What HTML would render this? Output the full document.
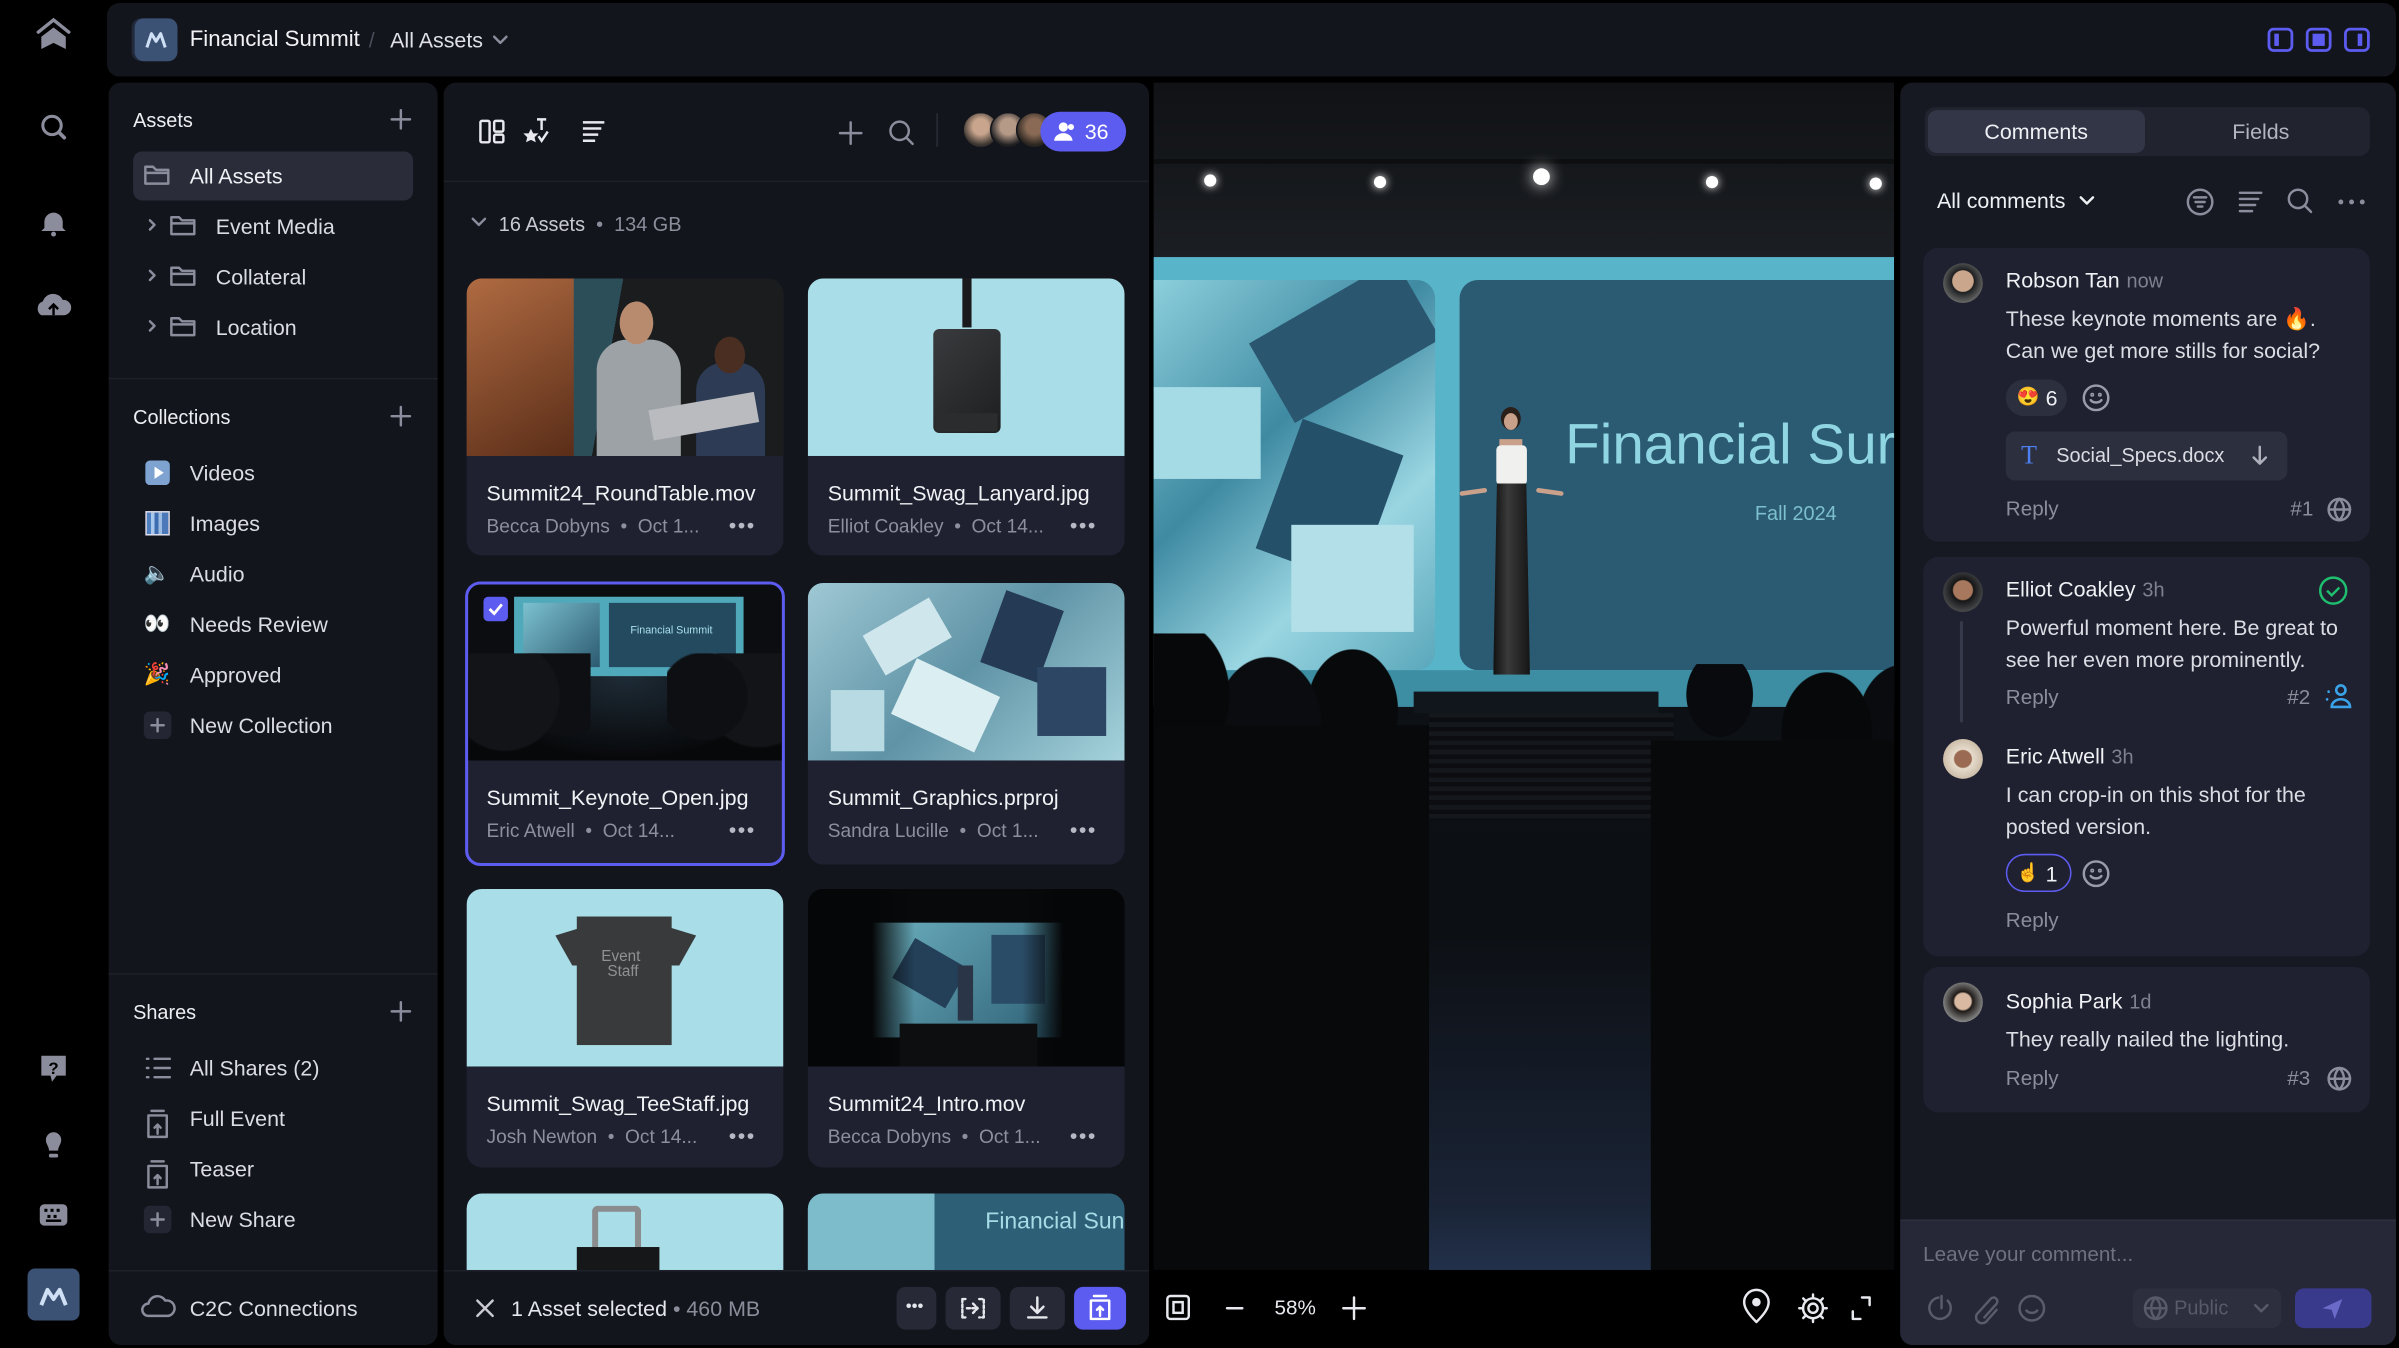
<!DOCTYPE html>
<html><head><meta charset="utf-8"><style>
*{margin:0;padding:0;box-sizing:border-box}
html,body{width:2399px;height:1348px;overflow:hidden;background:#000}
#s{position:absolute;left:0;top:0;width:1568px;height:881px;transform:scale(1.52997,1.5301);transform-origin:0 0;font-family:"Liberation Sans",sans-serif;color:#e8e9ef;background:#000}
.a{position:absolute}
.pan{position:absolute;background:#13151d;border-radius:8px}
.t{position:absolute;white-space:nowrap}
.ic{position:absolute;fill:none;stroke:#8b8d9c;stroke-width:1.6;stroke-linecap:round;stroke-linejoin:round}
.g{color:#8b8d9a}
.card{position:absolute;width:207px;background:#1f2130;border-radius:10px;overflow:hidden}
.card .im{height:116px;position:relative;overflow:hidden}
.card .n{position:absolute;left:13px;top:132px;font-size:14px;color:#f1f2f5}
.card .m{position:absolute;left:13px;top:155px;font-size:12.5px;color:#8d8f9d}
.card .d{position:absolute;right:18px;top:153px;font-size:14px;color:#b6b8c4;letter-spacing:1px}
.ci{position:absolute;left:1257px;width:292px;background:#1f2130;border-radius:10px}
.av{position:absolute;width:26px;height:26px;border-radius:50%}
.nm{font-size:14px;color:#f0f1f4}
.tm{font-size:13px;color:#7f8190}
.bd{font-size:14px;color:#dcdde4;line-height:21px}
.rp{font-size:13.5px;color:#8b8d9a}
</style></head><body><div id="s">

<!-- left rail -->
<svg class="a" style="left:0;top:0" width="70" height="881">
<g fill="#8b8d9c">
<path d="M27 32 L27 24 L35 18 L43 24 L43 32 L35 28 Z"/>
<path d="M25 21 L35 13 L45 21" fill="none" stroke="#8b8d9c" stroke-width="2.2" stroke-linecap="round"/>
<path d="M29 145 a6 6 0 0 1 12 0 l0 4 l2 2 l-16 0 l2 -2 Z"/><circle cx="35" cy="153" r="1.6"/>
<path d="M27 206 a5 5 0 0 1 1 -9 a7 7 0 0 1 13 -1 a5 5 0 0 1 1 10 Z"/>
<path d="M27 690 h16 v13 h-6 l-3 4 l-1 -4 h-6 Z"/>
<path d="M30 745 a5 5 0 0 1 10 0 c0 3 -2 4 -2 7 h-6 c0 -3 -2 -4 -2 -7 Z"/><rect x="32" y="754" width="6" height="2.5" rx="1"/>
<rect x="26" y="787" width="18" height="14" rx="3"/>
</g>
<circle cx="34" cy="82" r="6" fill="none" stroke="#8b8d9c" stroke-width="2"/><path d="M38.5 86.5 L42 90" stroke="#8b8d9c" stroke-width="2.4" stroke-linecap="round"/>
<path d="M35 206 v-7 M32 202 l3 -3 l3 3" stroke="#000" stroke-width="1.6" fill="none"/>
<text x="35" y="702" font-size="11" font-weight="bold" fill="#000" text-anchor="middle" font-family="Liberation Sans">?</text>
<g fill="#000"><rect x="29" y="790" width="2" height="2"/><rect x="33" y="790" width="2" height="2"/><rect x="37" y="790" width="2" height="2"/><rect x="31" y="794" width="2" height="2"/><rect x="35" y="794" width="2" height="2"/><rect x="30" y="797" width="10" height="1.6"/></g>
<rect x="18" y="829" width="34" height="34" rx="5" fill="#3b5275"/>
<path d="M27 853 l4 -10 l4 6 l4 -6 l4 10" stroke="#cfe0f5" stroke-width="2.6" fill="none" stroke-linejoin="round"/>
</svg>

<!-- top bar -->
<div class="pan" style="left:70px;top:2px;width:1496px;height:48px"></div>
<div class="a" style="left:88px;top:12px;width:28px;height:28px;border-radius:6px;background:#3b5275;box-shadow:-2px 0 0 #22293a"></div>
<svg class="a" style="left:88px;top:12px" width="28" height="28"><path d="M8 19 l3 -9 l3 5 l3 -5 l3 9" stroke="#cfe0f5" stroke-width="2" fill="none" stroke-linejoin="round"/></svg>
<div class="t" style="left:124px;top:18px;font-size:14.5px;color:#f2f2f5">Financial Summit</div>
<div class="t" style="left:241px;top:18px;font-size:14px;color:#4a4c58">/</div>
<div class="t" style="left:255px;top:18px;font-size:14px;color:#dfe0e6">All Assets</div>
<svg class="ic" style="left:321px;top:21px" width="12" height="10"><path d="M2 3 l4 4 l4 -4"/></svg>
<svg class="a" style="left:1481px;top:16px" width="72" height="20" fill="none" stroke="#5d5cf0" stroke-width="1.8">
<rect x="2" y="3" width="15" height="14" rx="3"/><rect x="5.5" y="6" width="3" height="8" fill="#5d5cf0" stroke="none"/>
<rect x="27" y="3" width="15" height="14" rx="3"/><rect x="30.5" y="6" width="8" height="8" fill="#5d5cf0" stroke="none"/>
<rect x="52" y="3" width="15" height="14" rx="3"/><rect x="60" y="6" width="3" height="8" fill="#5d5cf0" stroke="none"/>
</svg>

<!-- left panel -->
<div class="pan" style="left:71px;top:54px;width:215px;height:825px"></div>
<div class="a" style="left:71px;top:247px;width:215px;height:1px;background:#1f2129"></div>
<div class="a" style="left:71px;top:636px;width:215px;height:1px;background:#1f2129"></div>
<div class="a" style="left:71px;top:830px;width:215px;height:1px;background:#1f2129"></div>
<div class="t" style="left:87px;top:71px;font-size:13px;color:#eceef2">Assets</div>
<div class="t" style="left:87px;top:265px;font-size:13px;color:#eceef2">Collections</div>
<div class="t" style="left:87px;top:654px;font-size:13px;color:#eceef2">Shares</div>
<svg class="ic" style="left:254px;top:70px" width="16" height="16"><path d="M8 2v12M2 8h12"/></svg>
<svg class="ic" style="left:254px;top:264px" width="16" height="16"><path d="M8 2v12M2 8h12"/></svg>
<svg class="ic" style="left:254px;top:653px" width="16" height="16"><path d="M8 2v12M2 8h12"/></svg>
<div class="a" style="left:87px;top:99px;width:183px;height:32px;border-radius:6px;background:#2a2c3a"></div>
<svg class="ic" style="left:92px;top:105px" width="180" height="130">
<path d="M3 4 h5 l2 2 h8 v9 h-15 Z M3 8 h15"/>
<path d="M6 39 l3 3 l-3 3"/><path d="M20 37 h5 l2 2 h8 v9 h-15 Z M20 41 h15"/>
<path d="M6 72 l3 3 l-3 3"/><path d="M20 70 h5 l2 2 h8 v9 h-15 Z M20 74 h15"/>
<path d="M6 105 l3 3 l-3 3"/><path d="M20 103 h5 l2 2 h8 v9 h-15 Z M20 107 h15"/>
</svg>
<div class="t" style="left:124px;top:107px;font-size:14px;color:#f0f1f4">All Assets</div>
<div class="t" style="left:141px;top:140px;font-size:14px;color:#dcdde4">Event Media</div>
<div class="t" style="left:141px;top:173px;font-size:14px;color:#dcdde4">Collateral</div>
<div class="t" style="left:141px;top:206px;font-size:14px;color:#dcdde4">Location</div>
<!-- collections -->
<div class="a" style="left:95px;top:301px;width:16px;height:16px;border-radius:3px;background:#7ea3d1"></div>
<div class="a" style="left:101px;top:305px;width:0;height:0;border-left:6px solid #fff;border-top:4px solid transparent;border-bottom:4px solid transparent"></div>
<div class="a" style="left:95px;top:334px;width:16px;height:16px;background:linear-gradient(90deg,#4e7fc0 0 20%,#a9c8ec 20% 35%,#3d6db0 35% 55%,#9bbbe2 55% 70%,#4a78b8 70%);border:1px solid #dde"></div>
<div class="t" style="left:94px;top:366px;font-size:14px">🔈</div>
<div class="t" style="left:94px;top:399px;font-size:14px">👀</div>
<div class="t" style="left:94px;top:432px;font-size:14px">🎉</div>
<div class="a" style="left:94px;top:465px;width:18px;height:18px;border-radius:4px;background:#242634"></div>
<svg class="ic" style="left:94px;top:465px" width="18" height="18"><path d="M9 5v8M5 9h8"/></svg>
<div class="t" style="left:124px;top:301px;font-size:14px;color:#dcdde4">Videos</div>
<div class="t" style="left:124px;top:334px;font-size:14px;color:#dcdde4">Images</div>
<div class="t" style="left:124px;top:367px;font-size:14px;color:#dcdde4">Audio</div>
<div class="t" style="left:124px;top:400px;font-size:14px;color:#dcdde4">Needs Review</div>
<div class="t" style="left:124px;top:433px;font-size:14px;color:#dcdde4">Approved</div>
<div class="t" style="left:124px;top:466px;font-size:14px;color:#dcdde4">New Collection</div>
<!-- shares -->
<svg class="ic" style="left:93px;top:689px" width="20" height="120">
<path d="M3 3h1M3 9h1M3 15h1M8 3h10M8 9h10M8 15h10"/>
<path d="M4 40 h12 v14 h-12 Z M6 37 h8 M10 52 v-6 M8 48 l2 -2 l2 2"/>
<path d="M4 73 h12 v14 h-12 Z M6 70 h8 M10 85 v-6 M8 81 l2 -2 l2 2"/>
</svg>
<div class="a" style="left:94px;top:788px;width:18px;height:18px;border-radius:4px;background:#242634"></div>
<svg class="ic" style="left:94px;top:788px" width="18" height="18"><path d="M9 5v8M5 9h8"/></svg>
<div class="t" style="left:124px;top:690px;font-size:14px;color:#dcdde4">All Shares (2)</div>
<div class="t" style="left:124px;top:723px;font-size:14px;color:#dcdde4">Full Event</div>
<div class="t" style="left:124px;top:756px;font-size:14px;color:#dcdde4">Teaser</div>
<div class="t" style="left:124px;top:789px;font-size:14px;color:#dcdde4">New Share</div>
<svg class="ic" style="left:92px;top:844px" width="24" height="20"><path d="M5 16 a4 4 0 0 1 0 -8 a6 6 0 0 1 11 -2 a5 5 0 0 1 2 10 Z"/></svg>
<div class="t" style="left:124px;top:847px;font-size:14px;color:#dcdde4">C2C Connections</div>

<!-- grid panel -->
<div class="pan" style="left:290px;top:54px;width:461px;height:825px"></div>
<div class="a" style="left:290px;top:118px;width:461px;height:1px;background:#1f2129"></div>
<svg class="a" style="left:310px;top:74px;fill:none;stroke:#e8e9ef;stroke-width:1.6" width="100" height="24">
<rect x="4" y="5" width="6" height="14" rx="1"/><rect x="13" y="5" width="6" height="7" rx="1"/><rect x="13" y="14" width="6" height="5" rx="1"/>
<path d="M37 12 l1 2 l2 0 l-1.5 1.5 l0.5 2 l-2 -1 l-2 1 l0.5 -2 l-1.5 -1.5 l2 0 Z" fill="#e8e9ef"/>
<path d="M41 4 h6 M44 4 v7 M42 15 l2 3 l4 -6"/>
<path d="M71 6 h14 M71 10 h12 M71 14 h10 M71 18 h8"/>
</svg>
<svg class="ic" style="left:547px;top:77px" width="52" height="20"><path d="M9 3v14M2 10h14"/><circle cx="41" cy="8.5" r="6"/><path d="M45.5 13 l4 4"/></svg>
<div class="a" style="left:612px;top:74px;width:1px;height:22px;background:#2a2c36"></div>
<div class="a" style="left:629px;top:73px;width:24px;height:24px;border-radius:50%;background:radial-gradient(circle at 50% 40%,#c8a58c 30%,#3a3430 70%);border:1.5px solid #13151d"></div>
<div class="a" style="left:647px;top:73px;width:24px;height:24px;border-radius:50%;background:radial-gradient(circle at 50% 40%,#b69a88 30%,#202022 70%);border:1.5px solid #13151d"></div>
<div class="a" style="left:664px;top:73px;width:24px;height:24px;border-radius:50%;background:radial-gradient(circle at 50% 40%,#8a6a55 30%,#2a2520 70%);border:1.5px solid #13151d"></div>
<div class="a" style="left:680px;top:73px;width:56px;height:26px;border-radius:13px;background:#5d5cf0"></div>
<svg class="a" style="left:688px;top:79px" width="16" height="14" fill="#fff"><circle cx="7" cy="4" r="3"/><path d="M1 13 a6 5 0 0 1 12 0 Z"/><circle cx="12" cy="4" r="2"/></svg>
<div class="t" style="left:709px;top:78px;font-size:14px;color:#fff">36</div>
<svg class="ic" style="left:307px;top:140px" width="12" height="10"><path d="M2 3 l4 4 l4 -4"/></svg>
<div class="t" style="left:326px;top:139px;font-size:13px;color:#c8c9d2">16 Assets <span class="g">&nbsp;•&nbsp; 134 GB</span></div>

<!-- cards -->
<div class="card" style="left:305px;top:182px;height:181px"><div class="im" style="background:linear-gradient(100deg,#8a4a2a 0 20%,#2c4e58 20% 45%,#1a1c1e 45%)">
<div class="a" style="left:0;top:0;width:70px;height:116px;background:linear-gradient(150deg,#b06b42,#5a2d18)"></div>
<div class="a" style="left:85px;top:40px;width:55px;height:76px;border-radius:20px 20px 0 0;background:#9da2a6"></div>
<div class="a" style="left:100px;top:15px;width:22px;height:28px;border-radius:50%;background:#b88a6e"></div>
<div class="a" style="left:150px;top:55px;width:45px;height:61px;border-radius:18px 18px 0 0;background:#2e3b55"></div>
<div class="a" style="left:162px;top:38px;width:20px;height:24px;border-radius:50%;background:#4a2e22"></div>
<div class="a" style="left:120px;top:80px;width:70px;height:20px;background:#b9bbbe;transform:rotate(-10deg)"></div>
</div><div class="n">Summit24_RoundTable.mov</div><div class="m">Becca Dobyns &nbsp;•&nbsp; Oct 1...</div><div class="d">•••</div></div>

<div class="card" style="left:528px;top:182px;height:181px"><div class="im" style="background:#a9dde7">
<div class="a" style="left:101px;top:0;width:6px;height:32px;background:#1a1a1c"></div>
<div class="a" style="left:82px;top:33px;width:44px;height:68px;border-radius:4px;background:linear-gradient(135deg,#3a3b3e,#1d1e20)"></div>
<div class="a" style="left:84px;top:88px;width:40px;height:12px;background:#2b2c2e"></div>
</div><div class="n">Summit_Swag_Lanyard.jpg</div><div class="m">Elliot Coakley &nbsp;•&nbsp; Oct 14...</div><div class="d">•••</div></div>

<div class="card" style="left:304px;top:380px;width:209px;height:186px;border:2px solid #5d5cf0"><div class="im" style="height:115px;background:#0b0d10">
<div class="a" style="left:30px;top:8px;width:150px;height:52px;background:#4fa9bb"></div>
<div class="a" style="left:36px;top:12px;width:50px;height:42px;background:linear-gradient(135deg,#7cc1cf,#2c5a70)"></div>
<div class="a" style="left:92px;top:12px;width:83px;height:42px;background:#244a60"></div>
<div class="t" style="left:106px;top:27px;font-size:7px;color:#a8e0ea">Financial Summit</div>
<div class="a" style="left:0;top:60px;width:205px;height:55px;background:radial-gradient(ellipse at 50% 0,#1e2b36,#07080a 70%)"></div>
<div class="a" style="left:0;top:45px;width:80px;height:70px;background:radial-gradient(circle at 30% 40%,#121417 50%,transparent 52%),radial-gradient(circle at 80% 30%,#0d0f12 40%,transparent 42%)"></div>
<div class="a" style="left:130px;top:45px;width:80px;height:70px;background:radial-gradient(circle at 30% 40%,#0d0f12 40%,transparent 42%),radial-gradient(circle at 75% 35%,#121417 48%,transparent 50%)"></div>
<div class="a" style="left:10px;top:8px;width:16px;height:16px;border-radius:3px;background:#5d5cf0"></div>
<svg class="a" style="left:10px;top:8px" width="16" height="16"><path d="M4 8 l3 3 l5 -6" stroke="#fff" stroke-width="1.8" fill="none"/></svg>
</div><div class="n" style="left:12px;top:131px">Summit_Keynote_Open.jpg</div><div class="m" style="left:12px;top:154px">Eric Atwell &nbsp;•&nbsp; Oct 14...</div><div class="d" style="right:17px;top:152px">•••</div></div>

<div class="card" style="left:528px;top:381px;height:184px"><div class="im" style="background:linear-gradient(135deg,#9fc8d4,#5f93a6 50%,#a6d3dc)">
<div class="a" style="left:40px;top:20px;width:50px;height:30px;background:#cfe7ec;transform:rotate(-30deg)"></div>
<div class="a" style="left:120px;top:10px;width:40px;height:50px;background:#243a55;transform:rotate(20deg)"></div>
<div class="a" style="left:60px;top:60px;width:60px;height:40px;background:#dbeef2;transform:rotate(25deg)"></div>
<div class="a" style="left:150px;top:55px;width:45px;height:45px;background:#2c4664"></div>
<div class="a" style="left:15px;top:70px;width:35px;height:40px;background:#b8dbe3"></div>
</div><div class="n">Summit_Graphics.prproj</div><div class="m">Sandra Lucille &nbsp;•&nbsp; Oct 1...</div><div class="d">•••</div></div>

<div class="card" style="left:305px;top:581px;height:182px"><div class="im" style="background:#a9dde7">
<div class="a" style="left:72px;top:18px;width:62px;height:84px;background:#383a3c"></div>
<div class="a" style="left:58px;top:22px;width:92px;height:28px;background:#383a3c;clip-path:polygon(0 30%,30% 0,70% 0,100% 30%,88% 100%,12% 100%)"></div>
<div class="t" style="left:88px;top:40px;font-size:10px;line-height:10px;color:#8f9294;text-align:center">Event<br>&nbsp;Staff</div>
</div><div class="n">Summit_Swag_TeeStaff.jpg</div><div class="m">Josh Newton &nbsp;•&nbsp; Oct 14...</div><div class="d">•••</div></div>

<div class="card" style="left:528px;top:581px;height:182px"><div class="im" style="background:#07090b">
<div class="a" style="left:30px;top:22px;width:150px;height:75px;background:linear-gradient(135deg,#6fb4c2,#2a5a70)"></div>
<div class="a" style="left:60px;top:40px;width:40px;height:30px;background:#234058;transform:rotate(30deg)"></div>
<div class="a" style="left:120px;top:30px;width:35px;height:45px;background:#2a4c66"></div>
<div class="a" style="left:0;top:0;width:70px;height:116px;background:linear-gradient(90deg,#050607 60%,transparent)"></div>
<div class="a" style="left:140px;top:0;width:67px;height:116px;background:linear-gradient(270deg,#050607 60%,transparent)"></div>
<div class="a" style="left:98px;top:50px;width:10px;height:36px;background:#2a3548"></div>
<div class="a" style="left:60px;top:88px;width:90px;height:28px;background:#0c0e10"></div>
</div><div class="n">Summit24_Intro.mov</div><div class="m">Becca Dobyns &nbsp;•&nbsp; Oct 1...</div><div class="d">•••</div></div>

<div class="a" style="left:305px;top:780px;width:207px;height:50px;border-radius:10px 10px 0 0;background:#a9dde7;overflow:hidden">
<div class="a" style="left:82px;top:8px;width:32px;height:40px;border:4px solid #8a8c8e;border-bottom:none;border-radius:4px 4px 0 0"></div>
<div class="a" style="left:72px;top:35px;width:54px;height:20px;background:#161718"></div></div>
<div class="a" style="left:528px;top:780px;width:207px;height:50px;border-radius:10px 10px 0 0;background:linear-gradient(90deg,#7cbccb 0 40%,#2d6077 40%);overflow:hidden">
<div class="t" style="left:116px;top:10px;font-size:15px;color:#a5dce6">Financial Sun</div></div>

<!-- grid bottom bar -->
<div class="a" style="left:290px;top:830px;width:461px;height:1px;background:#1f2129"></div>
<svg class="ic" style="left:309px;top:847px;stroke:#c9cad2" width="16" height="16"><path d="M3 3 l10 10 M13 3 l-10 10"/></svg>
<div class="t" style="left:334px;top:847px;font-size:14px;color:#e6e7ec">1 Asset selected <span class="g">• 460 MB</span></div>
<div class="a" style="left:586px;top:841px;width:26px;height:28px;border-radius:6px;background:#272937"></div>
<div class="t" style="left:592px;top:848px;font-size:11px;color:#e6e7ec;letter-spacing:0">•••</div>
<div class="a" style="left:618px;top:841px;width:36px;height:28px;border-radius:6px;background:#272937"></div>
<svg class="ic" style="left:626px;top:846px;stroke:#e6e7ec" width="20" height="18"><path d="M3 3 h3 M3 15 h3 M3 3 v12 M14 3 h3 v12 h-3 M6 9 h7 M10 6 l3 3 l-3 3" stroke-dasharray="2 1.5"/></svg>
<div class="a" style="left:660px;top:841px;width:36px;height:28px;border-radius:6px;background:#272937"></div>
<svg class="ic" style="left:668px;top:845px;stroke:#e6e7ec" width="20" height="20"><path d="M10 3 v10 M6 9 l4 4 l4 -4 M4 16 h12"/></svg>
<div class="a" style="left:702px;top:841px;width:34px;height:28px;border-radius:6px;background:#5d5cf0"></div>
<svg class="ic" style="left:709px;top:845px;stroke:#fff" width="20" height="20"><path d="M4 5 h12 v12 h-12 Z M6 2 h8 M10 15 v-6 M8 11 l2 -2 l2 2"/></svg>

<!-- preview -->
<div class="a" style="left:754px;top:54px;width:484px;height:776px;background:#07090c;overflow:hidden">
<div class="a" style="left:0;top:0;width:484px;height:114px;background:linear-gradient(#101215,#1b1e22)"></div>
<div class="a" style="left:0;top:50px;width:484px;height:3px;background:#0c0e10"></div>
<div class="a" style="left:33px;top:60px;width:8px;height:8px;border-radius:50%;background:#fff;box-shadow:0 0 6px #fff"></div>
<div class="a" style="left:144px;top:61px;width:8px;height:8px;border-radius:50%;background:#fff;box-shadow:0 0 6px #fff"></div>
<div class="a" style="left:248px;top:56px;width:11px;height:11px;border-radius:50%;background:#fff;box-shadow:0 0 10px #fff"></div>
<div class="a" style="left:361px;top:61px;width:8px;height:8px;border-radius:50%;background:#fff;box-shadow:0 0 6px #fff"></div>
<div class="a" style="left:468px;top:62px;width:8px;height:8px;border-radius:50%;background:#fff;box-shadow:0 0 6px #fff"></div>
<div class="a" style="left:0;top:114px;width:484px;height:294px;background:#58b4c8"></div>
<div class="a" style="left:0;top:129px;width:184px;height:255px;border-radius:0 12px 12px 0;background:linear-gradient(135deg,#8ccfdc,#3f8aa2 40%,#9ad6e2 70%,#5aa7bb);overflow:hidden">
<div class="a" style="left:70px;top:10px;width:110px;height:60px;background:#2a5670;transform:rotate(-30deg)"></div>
<div class="a" style="left:0;top:70px;width:70px;height:60px;background:#a5dbe5"></div>
<div class="a" style="left:80px;top:100px;width:70px;height:90px;background:#24506a;transform:rotate(20deg)"></div>
<div class="a" style="left:90px;top:160px;width:80px;height:70px;background:#b3e0e8"></div>
</div>
<div class="a" style="left:200px;top:129px;width:284px;height:255px;border-radius:12px 0 0 12px;background:#2b5a73"></div>
<div class="t" style="left:269px;top:216px;font-size:37px;color:#8fd6e2">Financial Sur</div>
<div class="t" style="left:393px;top:274px;font-size:13px;color:#7cbfcd">Fall 2024</div>
<div class="a" style="left:0;top:384px;width:484px;height:24px;background:#3d8ea3"></div>
<div class="a" style="left:0;top:408px;width:484px;height:368px;background:linear-gradient(#0d1115,#0b0e12)"></div>
<div class="a" style="left:170px;top:398px;width:160px;height:14px;background:#10161c"></div>
<div class="a" style="left:180px;top:412px;width:160px;height:70px;background:repeating-linear-gradient(#14181d 0 3px,#0b0d10 3px 6px)"></div>
<div class="a" style="left:170px;top:560px;width:160px;height:216px;background:linear-gradient(#0d1015,#1a2436 80%,#22304a)"></div>
<!-- woman -->
<div class="a" style="left:227px;top:212px;width:13px;height:15px;border-radius:50%;background:#2b1f1a"></div>
<div class="a" style="left:229px;top:216px;width:9px;height:11px;border-radius:50%;background:#c9a08a"></div>
<div class="a" style="left:226px;top:233px;width:15px;height:6px;background:#c9a08a"></div>
<div class="a" style="left:224px;top:237px;width:20px;height:26px;background:#f0f0ee;border-radius:3px"></div>
<div class="a" style="left:200px;top:266px;width:18px;height:3px;background:#c9a08a;border-radius:2px;transform:rotate(-8deg)"></div>
<div class="a" style="left:250px;top:266px;width:18px;height:3px;background:#c9a08a;border-radius:2px;transform:rotate(8deg)"></div>
<div class="a" style="left:222px;top:262px;width:24px;height:125px;background:linear-gradient(90deg,#111,#3a3a3a 40%,#151515);clip-path:polygon(10% 0,90% 0,100% 100%,0 100%)"></div>
<!-- audience -->
<div class="a" style="left:-20px;top:360px;width:190px;height:416px;background:radial-gradient(ellipse 40px 50px at 30px 40px,#06080a 98%,transparent),radial-gradient(ellipse 35px 45px at 95px 60px,#0a0c0f 98%,transparent),radial-gradient(ellipse 30px 40px at 150px 50px,#07090b 98%,transparent)"></div>
<div class="a" style="left:-20px;top:420px;width:200px;height:356px;background:#07090b"></div>
<div class="a" style="left:320px;top:380px;width:180px;height:396px;background:radial-gradient(ellipse 22px 28px at 50px 20px,#080a0d 98%,transparent),radial-gradient(ellipse 30px 40px at 120px 45px,#06080a 98%,transparent),radial-gradient(ellipse 30px 40px at 170px 40px,#090b0e 98%,transparent)"></div>
<div class="a" style="left:325px;top:430px;width:160px;height:346px;background:#07090b"></div>
</div>
<div class="a" style="left:754px;top:830px;width:484px;height:51px;background:#000"></div>
<svg class="a" style="left:760px;top:844px;fill:none;stroke:#e8e9ef;stroke-width:1.6;stroke-linecap:round" width="140" height="22">
<rect x="3" y="3" width="14" height="15" rx="2"/><rect x="7" y="7" width="6" height="7"/>
<path d="M42 11 h10"/><path d="M125 4 v14 M118 11 h14"/></svg>
<div class="t" style="left:833px;top:847px;font-size:13.5px;color:#e8e9ef">58%</div>
<svg class="a" style="left:1136px;top:842px;fill:none;stroke:#e8e9ef;stroke-width:1.6;stroke-linecap:round;stroke-linejoin:round" width="100" height="26">
<path d="M12 22 c-5 -5 -8 -9 -8 -13 a8 8 0 0 1 16 0 c0 4 -3 8 -8 13Z"/><circle cx="12" cy="9" r="2" fill="#e8e9ef"/>
<circle cx="49" cy="13" r="3"/><path d="M49 4 v2.5 M49 19.5 v2.5 M40 13 h2.5 M55.5 13 h2.5 M42.6 6.6 l1.8 1.8 M53.6 17.6 l1.8 1.8 M42.6 19.4 l1.8 -1.8 M53.6 8.4 l1.8 -1.8"/><circle cx="49" cy="13" r="6.5"/>
<path d="M81 6 h5 v5 M80 20 h-5 v-5"/></svg>

<!-- right panel -->
<div class="pan" style="left:1242px;top:54px;width:324px;height:825px;background:#161922"></div>
<div class="a" style="left:1258px;top:70px;width:291px;height:32px;border-radius:7px;background:#21232f"></div>
<div class="a" style="left:1260px;top:72px;width:142px;height:28px;border-radius:6px;background:#333647"></div>
<div class="t" style="left:1297px;top:78px;font-size:14px;color:#eef0f4">Comments</div>
<div class="t" style="left:1459px;top:78px;font-size:14px;color:#b2b4be">Fields</div>
<div class="t" style="left:1266px;top:123px;font-size:14px;color:#eef0f4">All comments</div>
<svg class="ic" style="left:1358px;top:126px;stroke:#eef0f4" width="12" height="10"><path d="M2 3 l4 4 l4 -4"/></svg>
<svg class="ic" style="left:1426px;top:121px" width="124" height="22">
<circle cx="12" cy="11" r="8"/><path d="M8 8 h8 M9 11 h6 M10.5 14 h3"/>
<path d="M38 5 h14 M38 9 h12 M38 13 h10 M38 17 h8"/>
<circle cx="76" cy="9" r="6"/><path d="M80.5 13.5 l4 4"/>
<circle cx="104" cy="11" r=".8"/><circle cx="111" cy="11" r=".8"/><circle cx="118" cy="11" r=".8"/></svg>

<!-- comment 1 -->
<div class="ci" style="top:162px;height:192px"></div>
<div class="av" style="left:1270px;top:172px;background:radial-gradient(circle at 50% 45%,#caa78c 35%,#1d1e20 38%,#6a6c6a 75%)"></div>
<div class="t" style="left:1311px;top:175px"><span class="nm">Robson Tan</span> <span class="tm">now</span></div>
<div class="t bd" style="left:1311px;top:198px">These keynote moments are 🔥.<br>Can we get more stills for social?</div>
<div class="a" style="left:1311px;top:248px;width:40px;height:24px;border-radius:12px;background:#2c2f3e"></div>
<div class="t" style="left:1318px;top:252px;font-size:12px">😍</div>
<div class="t" style="left:1337px;top:252px;font-size:14px;color:#eef0f4">6</div>
<svg class="ic" style="left:1359px;top:249px;stroke:#9a9cab" width="22" height="22"><circle cx="11" cy="11" r="8"/><path d="M7.5 12.5 a4 3 0 0 0 7 0"/><circle cx="8.5" cy="9" r=".5"/><circle cx="13.5" cy="9" r=".5"/></svg>
<div class="a" style="left:1311px;top:282px;width:184px;height:32px;border-radius:6px;background:#2c2f3e"></div>
<div class="t" style="left:1321px;top:288px;font-size:17px;color:#4d7ff0;font-family:'Liberation Serif',serif">T</div>
<div class="t" style="left:1344px;top:290px;font-size:13px;color:#dcdde4">Social_Specs.docx</div>
<svg class="ic" style="left:1470px;top:289px;stroke:#aeb0bc" width="14" height="18"><path d="M7 3 v11 M3 10 l4 4 l4 -4"/></svg>
<div class="t rp" style="left:1311px;top:325px">Reply</div>
<div class="t rp" style="left:1497px;top:325px">#1</div>
<svg class="ic" style="left:1520px;top:324px" width="18" height="18"><circle cx="9" cy="9" r="7"/><path d="M2 9 h14 M9 2 c-4 4 -4 10 0 14 M9 2 c4 4 4 10 0 14"/></svg>

<!-- comment 2 -->
<div class="ci" style="top:364px;height:261px"></div>
<div class="av" style="left:1270px;top:374px;background:radial-gradient(circle at 50% 45%,#a8785e 32%,#151516 36%,#4a4c4e 75%)"></div>
<div class="a" style="left:1281px;top:406px;width:2px;height:66px;background:#363949"></div>
<div class="t" style="left:1311px;top:377px"><span class="nm">Elliot Coakley</span> <span class="tm">3h</span></div>
<svg class="a" style="left:1514px;top:375px" width="22" height="22" fill="none" stroke="#1fbf6f" stroke-width="1.6"><circle cx="11" cy="11" r="8.5"/><path d="M7 11 l3 3 l5 -5"/></svg>
<div class="t bd" style="left:1311px;top:400px">Powerful moment here. Be great to<br>see her even more prominently.</div>
<div class="t rp" style="left:1311px;top:448px">Reply</div>
<div class="t rp" style="left:1495px;top:448px">#2</div>
<svg class="a" style="left:1519px;top:446px" width="20" height="18" fill="none" stroke="#3aa3e8" stroke-width="1.7" stroke-linecap="round"><circle cx="11" cy="5" r="3"/><path d="M5 16 a6 5 0 0 1 12 0 Z M3 6 v.1 M2 11 v.1"/></svg>
<div class="av" style="left:1270px;top:483px;background:radial-gradient(circle at 50% 50%,#9a6b52 30%,#e6dccd 34%,#c9b9a4 75%)"></div>
<div class="t" style="left:1311px;top:486px"><span class="nm">Eric Atwell</span> <span class="tm">3h</span></div>
<div class="t bd" style="left:1311px;top:509px">I can crop-in on this shot for the<br>posted version.</div>
<div class="a" style="left:1311px;top:558px;width:43px;height:25px;border-radius:13px;border:1.5px solid #5d5cf0;background:#1f2130"></div>
<div class="t" style="left:1318px;top:563px;font-size:12px">☝️</div>
<div class="t" style="left:1337px;top:563px;font-size:14px;color:#eef0f4">1</div>
<svg class="ic" style="left:1359px;top:560px;stroke:#9a9cab" width="22" height="22"><circle cx="11" cy="11" r="8"/><path d="M7.5 12.5 a4 3 0 0 0 7 0"/><circle cx="8.5" cy="9" r=".5"/><circle cx="13.5" cy="9" r=".5"/></svg>
<div class="t rp" style="left:1311px;top:594px">Reply</div>

<!-- comment 3 -->
<div class="ci" style="top:632px;height:95px"></div>
<div class="av" style="left:1270px;top:642px;background:radial-gradient(circle at 50% 48%,#d9b9a2 28%,#1f1a18 34%,#8f9190 75%)"></div>
<div class="t" style="left:1311px;top:646px"><span class="nm">Sophia Park</span> <span class="tm">1d</span></div>
<div class="t bd" style="left:1311px;top:669px">They really nailed the lighting.</div>
<div class="t rp" style="left:1311px;top:697px">Reply</div>
<div class="t rp" style="left:1495px;top:697px">#3</div>
<svg class="ic" style="left:1520px;top:696px" width="18" height="18"><circle cx="9" cy="9" r="7"/><path d="M2 9 h14 M9 2 c-4 4 -4 10 0 14 M9 2 c4 4 4 10 0 14"/></svg>

<!-- input -->
<div class="a" style="left:1242px;top:797px;width:324px;height:82px;background:#262837;border-radius:0 0 8px 8px;border-top:1px solid #2e3040"></div>
<div class="t" style="left:1257px;top:812px;font-size:13.5px;color:#6f7181">Leave your comment...</div>
<svg class="ic" style="left:1259px;top:843px;stroke:#5a5c6b" width="84" height="24">
<path d="M8 5 a7 7 0 1 0 6 2 M10 4 v8"/>
<path d="M38 18 l8 -9 a2.5 2.5 0 0 0 -4 -3 l-9 10 a4 4 0 0 0 6 5 l7 -8"/>
<circle cx="69" cy="12" r="8"/><path d="M65.5 13.5 a4 3 0 0 0 7 0"/></svg>
<div class="a" style="left:1394px;top:842px;width:97px;height:26px;border-radius:6px;background:#2d2f3f"></div>
<svg class="ic" style="left:1400px;top:846px;stroke:#585a69" width="18" height="18"><circle cx="9" cy="9" r="7"/><path d="M2 9 h14 M9 2 c-4 4 -4 10 0 14 M9 2 c4 4 4 10 0 14"/></svg>
<div class="t" style="left:1421px;top:847px;font-size:13px;color:#585a69">Public</div>
<svg class="ic" style="left:1472px;top:850px;stroke:#585a69" width="12" height="10"><path d="M2 3 l4 4 l4 -4"/></svg>
<div class="a" style="left:1500px;top:842px;width:50px;height:26px;border-radius:6px;background:#3a3a8c"></div>
<svg class="a" style="left:1516px;top:847px" width="18" height="16"><path d="M15 2 L2 8 L8 9 L10 15 Z" fill="#6a6bc8"/></svg>

</div></body></html>
